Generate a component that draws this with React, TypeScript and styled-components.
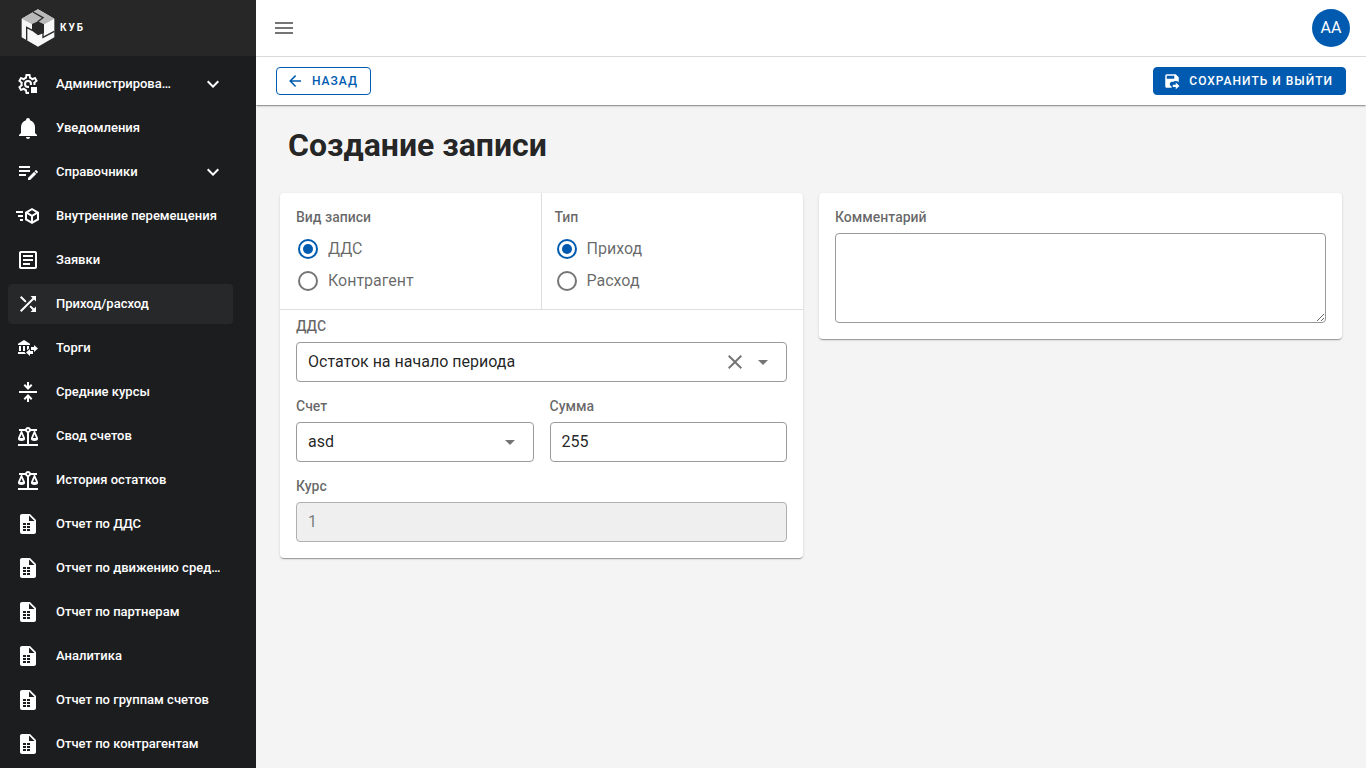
import React, { useState } from "react";
import styled, { createGlobalStyle } from "styled-components";

const color = {
  primary: "#005bb0",
  text: "rgba(0, 0, 0, 0.87)",
  muted: "rgba(0, 0, 0, 0.6)",
  icon: "rgba(0, 0, 0, 0.54)",
  outline: "#9a9a9a",
  divider: "#dedede",
  page: "#f4f4f4",
  sidebar: "#1c1d1f",
  brand: "#272727",
  active: "#27282a",
};

const elevation =
  "0 2px 1px -1px rgba(0,0,0,.2), 0 1px 1px 0 rgba(0,0,0,.14), 0 1px 3px 0 rgba(0,0,0,.12)";

const GlobalStyle = createGlobalStyle`
  *, *::before, *::after { box-sizing: border-box; }
  body {
    margin: 0;
    background: ${color.page};
    color: ${color.text};
    font-family: Roboto, "Liberation Sans", sans-serif;
    font-size: 16px;
    line-height: 24px;
  }
  button, input, select, textarea { font: inherit; color: inherit; }
`;

/* Icons */

const paths = {
  bell: "M21,19V20H3V19L5,17V11C5,7.9 7.03,5.17 10,4.29C10,4.19 10,4.1 10,4A2,2 0 0,1 12,2A2,2 0 0,1 14,4C14,4.1 14,4.19 14,4.29C16.97,5.17 19,7.9 19,11V17L21,19M14,21A2,2 0 0,1 12,23A2,2 0 0,1 10,21",
  listEdit:
    "M3 6V8H14V6H3M3 10V12H14V10H3M20 10.1C19.9 10.1 19.7 10.2 19.6 10.3L18.6 11.3L20.7 13.4L21.7 12.4C21.9 12.2 21.9 11.8 21.7 11.6L20.4 10.3C20.3 10.2 20.2 10.1 20 10.1M18.1 11.8L12 17.9V20H14.1L20.2 13.9L18.1 11.8M3 14V16H10V14H3Z",
  cubeSend:
    "M16,4L9,8.04V15.96L16,20L23,15.96V8.04M16,6.31L19.8,8.5L16,10.69L12.21,8.5M0,7V9H7V7M11,10.11L15,12.42V17.11L11,14.81M21,10.11V14.81L17,17.11V12.42M2,11V13H7V11M4,15V17H7V15",
  textBox:
    "M5,3C3.89,3 3,3.89 3,5V19C3,20.11 3.89,21 5,21H19C20.11,21 21,20.11 21,19V5C21,3.89 20.11,3 19,3H5M5,5H19V19H5V5M7,7V9H17V7H7M7,11V13H17V11H7M7,15V17H14V15H7Z",
  shuffle:
    "M14.83,13.41L13.42,14.82L16.55,17.95L14.5,20H20V14.5L17.96,16.54L14.83,13.41M14.5,4L16.54,6.04L4,18.59L5.41,20L17.96,7.46L20,9.5V4M10.59,9.17L5.41,4L4,5.41L9.17,10.58L10.59,9.17Z",
  bank: "M15,14V11H18V9L22,12.5L18,16V14H15M14,7.7V9H2V7.7L8,4L14,7.7M7,10H9V15H7V10M3,10H5V15H3V10M13,10V12.5L11,14.3V10H13M9.1,16L8.5,16.5L10.2,18H2V16H9.1M17,15V18H14V20L10,16.5L14,13V15H17Z",
  average:
    "M3 11H21V13H3ZM11 2H13V6L15 4.1L16.4 5.5L12 9.9L7.6 5.5L9 4.1L11 6ZM11 22H13V18L15 19.9L16.4 18.5L12 14.1L7.6 18.5L9 19.9L11 18Z",
  scale:
    "M12,3C10.73,3 9.6,3.8 9.18,5H3V7H4.95L2,14C1.53,16 3,17 5.5,17C8,17 9.56,16 9,14L6.05,7H9.17C9.5,7.85 10.15,8.5 11,8.83V20H2V22H22V20H13V8.82C13.85,8.5 14.5,7.85 14.82,7H17.95L15,14C14.53,16 16,17 18.5,17C21,17 22.56,16 22,14L19.05,7H21V5H14.83C14.4,3.8 13.27,3 12,3M12,5A1,1 0 0,1 13,6A1,1 0 0,1 12,7A1,1 0 0,1 11,6A1,1 0 0,1 12,5M5.5,10.25L7,14H4L5.5,10.25M18.5,10.25L20,14H17L18.5,10.25Z",
  report:
    "M14 2H6C4.89 2 4 2.9 4 4V20C4 21.11 4.89 22 6 22H18C19.11 22 20 21.11 20 20V8L14 2M10 19H7V17H10V19M10 16H7V14H10V16M10 13H7V11H10V13M14 19H11V17H14V19M14 16H11V14H14V16M14 13H11V11H14V13M13 9V3.5L18.5 9H13Z",
  menu: "M3,6H21V8H3V6M3,11H21V13H3V11M3,16H21V18H3V16Z",
  arrowLeft:
    "M20,11V13H8L13.5,18.5L12.08,19.92L4.16,12L12.08,4.08L13.5,5.5L8,11H20Z",
  saveExit:
    "M17,3H5A2,2 0 0,0 3,5V19A2,2 0 0,0 5,21H11.81C11.42,20.34 11.17,19.6 11.07,18.84C9.5,18.31 8.66,16.6 9.2,15.03C9.61,13.83 10.73,13 12,13C12.44,13 12.88,13.1 13.28,13.29C15.57,11.5 18.83,11.59 21,13.54V7L17,3M15,9H5V5H15V9M13,17H17V14L22,18.5L17,23V20H13V17",
  close:
    "M19,6.41L17.59,5L12,10.59L6.41,5L5,6.41L10.59,12L5,17.59L6.41,19L12,13.41L17.59,19L19,17.59L13.41,12L19,6.41Z",
  caret: "M7,10L12,15L17,10H7Z",
  chevron:
    "M7.41,8.58L12,13.17L16.59,8.58L18,10L12,16L6,10L7.41,8.58Z",
};

const cogPath =
  "M12,8A4,4 0 0,1 16,12A4,4 0 0,1 12,16A4,4 0 0,1 8,12A4,4 0 0,1 12,8M12,10A2,2 0 0,0 10,12A2,2 0 0,0 12,14A2,2 0 0,0 14,12A2,2 0 0,0 12,10M10,22C9.75,22 9.54,21.82 9.5,21.58L9.13,18.93C8.5,18.68 7.96,18.34 7.44,17.94L4.95,18.95C4.73,19.03 4.46,18.95 4.34,18.73L2.34,15.27C2.21,15.05 2.27,14.78 2.46,14.63L4.57,12.97L4.5,12L4.57,11L2.46,9.37C2.27,9.22 2.21,8.95 2.34,8.73L4.34,5.27C4.46,5.05 4.73,4.96 4.95,5.05L7.44,6.05C7.96,5.66 8.5,5.32 9.13,5.07L9.5,2.42C9.54,2.18 9.75,2 10,2H14C14.25,2 14.46,2.18 14.5,2.42L14.87,5.07C15.5,5.32 16.04,5.66 16.56,6.05L19.05,5.05C19.27,4.96 19.54,5.05 19.66,5.27L21.66,8.73C21.79,8.95 21.73,9.22 21.54,9.37L19.43,11L19.5,12L19.43,13L21.54,14.63C21.73,14.78 21.79,15.05 21.66,15.27L19.66,18.73C19.54,18.95 19.27,19.04 19.05,18.95L16.56,17.95C16.04,18.34 15.5,18.68 14.87,18.93L14.5,21.58C14.46,21.82 14.25,22 14,22H10M11.25,4L10.88,6.61C9.68,6.86 8.62,7.5 7.85,8.39L5.44,7.35L4.69,8.65L6.8,10.2C6.4,11.37 6.4,12.64 6.8,13.8L4.68,15.36L5.43,16.66L7.86,15.62C8.63,16.5 9.68,17.14 10.87,17.38L11.24,20H12.76L13.13,17.39C14.32,17.14 15.37,16.5 16.14,15.62L18.57,16.66L19.32,15.36L17.2,13.81C17.6,12.64 17.6,11.37 17.2,10.2L19.31,8.65L18.56,7.35L16.15,8.39C15.38,7.5 14.32,6.86 13.12,6.62L12.75,4H11.25Z";

type IconName = keyof typeof paths | "cogStop";

const Svg = styled.svg`
  display: block;
  flex: none;
  fill: currentColor;
`;

function Icon({ name, size = 24 }: { name: IconName; size?: number }) {
  const frame = { width: size, height: size, viewBox: "0 0 24 24", "aria-hidden": true };
  if (name === "cogStop") {
    return (
      <Svg {...frame}>
        <mask id="cog-cut">
          <rect width="24" height="24" fill="#fff" />
          <rect x="13" y="13" width="11" height="11" fill="#000" />
        </mask>
        <path d={cogPath} mask="url(#cog-cut)" />
        <rect x="15" y="15" width="6" height="6" />
      </Svg>
    );
  }
  return (
    <Svg {...frame}>
      <path d={paths[name]} />
    </Svg>
  );
}

function Logo() {
  return (
    <Svg width="34" height="38" viewBox="0 0 102 114" aria-hidden>
      <path fill="#f7f7f7" d="M51 1 100 29V85L51 113 2 85V29Z" />
      <path fill="#b9b9b9" d="M51 1 100 29 70 46 51 37 33 46 2 29Z" />
      <path fill={color.brand} d="M33 45 51 37 69 46V72L51 79 33 65Z" />
      <path
        fill="none"
        stroke={color.brand}
        strokeWidth="4"
        d="M36 9 66 26 50 38M17 94V55L34 64M100 67 66 85V70"
      />
    </Svg>
  );
}

/* Page frame */

const Shell = styled.div`
  display: flex;
  min-height: 100vh;
`;

const Sidebar = styled.aside`
  flex: none;
  width: 256px;
  height: 100vh;
  position: sticky;
  top: 0;
  display: flex;
  flex-direction: column;
  background: ${color.sidebar};
  color: #fff;
`;

const Brand = styled.a`
  flex: none;
  display: flex;
  align-items: center;
  gap: 5px;
  height: 56px;
  padding: 0 21px;
  background: ${color.brand};
  color: #fff;
  font-size: 10px;
  font-weight: 700;
  letter-spacing: 2px;
  text-decoration: none;
`;

const NavList = styled.nav`
  flex: 1;
  min-height: 0;
  overflow: hidden;
  display: flex;
  flex-direction: column;
  gap: 4px;
  padding: 8px 23px 0 8px;
`;

const NavItem = styled.a<{ $active?: boolean }>`
  flex: none;
  display: flex;
  align-items: center;
  height: 40px;
  padding: 0 8px;
  border-radius: 4px;
  background: ${(p) => (p.$active ? color.active : "transparent")};
  color: #fff;
  text-decoration: none;
`;

const NavLabel = styled.span`
  flex: 1;
  min-width: 0;
  margin-left: 16px;
  overflow: hidden;
  text-overflow: ellipsis;
  white-space: nowrap;
  font-size: 13px;
  font-weight: 500;
  line-height: 16px;
`;

const NavChevron = styled.span`
  padding-left: 24px;
`;

const Content = styled.div`
  flex: 1;
  min-width: 0;
`;

const TopBar = styled.header`
  display: flex;
  align-items: center;
  justify-content: space-between;
  height: 57px;
  padding: 0 16px;
  background: #fff;
  border-bottom: 1px solid ${color.divider};
`;

const IconButton = styled.button`
  display: flex;
  padding: 0;
  border: 0;
  background: none;
  color: ${color.icon};
  cursor: pointer;
`;

const Avatar = styled.button`
  width: 38px;
  height: 38px;
  padding: 0;
  border: 0;
  border-radius: 50%;
  background: ${color.primary};
  color: #fff;
  cursor: pointer;
`;

const ActionBar = styled.div`
  display: flex;
  align-items: center;
  justify-content: space-between;
  height: 48px;
  padding: 0 20px;
  background: #fff;
  box-shadow: ${elevation};
`;

const ActionButton = styled.button<{ $filled?: boolean }>`
  display: flex;
  align-items: center;
  gap: 8px;
  height: 28px;
  padding: 0 12px 0 9px;
  border: 1px solid ${color.primary};
  border-radius: 4px;
  background: ${(p) => (p.$filled ? color.primary : "transparent")};
  color: ${(p) => (p.$filled ? "#fff" : color.primary)};
  font-size: 12px;
  font-weight: 500;
  letter-spacing: 1px;
  text-transform: uppercase;
  cursor: pointer;
`;

const Main = styled.main`
  padding: 20px 24px 24px;
`;

const Title = styled.h1`
  margin: 0 8px 28px;
  font-size: 32px;
  font-weight: 700;
  line-height: 40px;
`;

/* Form */

const Cards = styled.form`
  display: grid;
  grid-template-columns: 1fr 1fr;
  align-items: start;
  gap: 16px;
`;

const Card = styled.section`
  background: #fff;
  border-radius: 4px;
  box-shadow: ${elevation};
`;

const ChoiceRow = styled.div`
  display: flex;
  border-bottom: 1px solid ${color.divider};
`;

const ChoiceGroup = styled.div.attrs({ role: "radiogroup" })`
  flex: 1;
  min-width: 0;
  padding: 12px 14px;

  &:first-child {
    flex: none;
    width: 50%;
    max-width: calc(50% - 1px);
    padding-left: 16px;
    box-shadow: 1px 0 ${color.divider};
  }
`;

const Caption = styled.span`
  display: block;
  margin-bottom: 4px;
  color: ${color.muted};
  font-size: 14px;
  font-weight: 500;
  line-height: 24px;
`;

const Choice = styled.label`
  display: flex;
  align-items: center;
  gap: 10px;
  height: 32px;
  padding-left: 2px;
  color: ${color.muted};
  cursor: pointer;
`;

const ChoiceTitle = styled(Caption)`
  margin-bottom: 4px;
`;

const Radio = styled.input.attrs({ type: "radio" })`
  appearance: none;
  flex: none;
  width: 20px;
  height: 20px;
  margin: 0;
  padding: 3px;
  border: 2px solid #757575;
  border-radius: 50%;

  &:checked {
    border-color: ${color.primary};
  }

  &:checked::before {
    content: "";
    display: block;
    width: 10px;
    height: 10px;
    border-radius: 50%;
    background: ${color.primary};
  }
`;

const Fields = styled.div`
  display: grid;
  grid-template-columns: 1fr 1fr;
  gap: 12px 16px;
  padding: 4px 16px 16px;
`;

const Field = styled.div<{ $wide?: boolean }>`
  grid-column: ${(p) => (p.$wide ? "1 / -1" : "auto")};
  min-width: 0;
`;

const Control = styled.div`
  position: relative;
`;

const Box = styled.input`
  display: block;
  width: 100%;
  height: 40px;
  padding: 0 11px 2px;
  border: 1px solid ${color.outline};
  border-radius: 4px;
  background: #fff;
  color: ${color.text};

  &:disabled {
    border-color: #b0b0b0;
    background: #efefef;
    color: rgba(0, 0, 0, 0.5);
  }
`;

const SelectBox = styled(Box).attrs({ as: "select" })`
  appearance: none;
  padding: 0 64px 0 11px;
`;

const Adornments = styled.div`
  position: absolute;
  top: 8px;
  right: 12px;
  display: flex;
  gap: 4px;
  color: ${color.icon};
  pointer-events: none;

  button {
    pointer-events: auto;
  }
`;

const CommentBody = styled.div`
  padding: 12px 16px 16px;
`;

const TextArea = styled.textarea`
  display: block;
  width: 100%;
  height: 90px;
  padding: 8px 11px;
  border: 1px solid ${color.outline};
  border-radius: 4px;
  background: #fff;
  resize: vertical;
`;

const navigation: { icon: IconName; label: string; group?: boolean; active?: boolean }[] = [
  { icon: "cogStop", label: "Администрирование", group: true },
  { icon: "bell", label: "Уведомления" },
  { icon: "listEdit", label: "Справочники", group: true },
  { icon: "cubeSend", label: "Внутренние перемещения" },
  { icon: "textBox", label: "Заявки" },
  { icon: "shuffle", label: "Приход/расход", active: true },
  { icon: "bank", label: "Торги" },
  { icon: "average", label: "Средние курсы" },
  { icon: "scale", label: "Свод счетов" },
  { icon: "scale", label: "История остатков" },
  { icon: "report", label: "Отчет по ДДС" },
  { icon: "report", label: "Отчет по движению средств" },
  { icon: "report", label: "Отчет по партнерам" },
  { icon: "report", label: "Аналитика" },
  { icon: "report", label: "Отчет по группам счетов" },
  { icon: "report", label: "Отчет по контрагентам" },
];

function RadioGroup({ title, name, options }: { title: string; name: string; options: string[] }) {
  const [value, setValue] = useState(options[0]);
  return (
    <ChoiceGroup aria-labelledby={`${name}-title`}>
      <ChoiceTitle id={`${name}-title`}>{title}</ChoiceTitle>
      {options.map((option) => (
        <Choice key={option}>
          <Radio name={name} checked={value === option} onChange={() => setValue(option)} />
          {option}
        </Choice>
      ))}
    </ChoiceGroup>
  );
}

export default function App() {
  const [article, setArticle] = useState("Остаток на начало периода");
  return (
    <>
      <GlobalStyle />
      <Shell>
        <Sidebar>
          <Brand href="#">
            <Logo />
            КУБ
          </Brand>
          <NavList>
            {navigation.map((item) => (
              <NavItem key={item.label} href="#" $active={item.active}>
                <Icon name={item.icon} />
                <NavLabel>{item.label}</NavLabel>
                {item.group && (
                  <NavChevron>
                    <Icon name="chevron" />
                  </NavChevron>
                )}
              </NavItem>
            ))}
          </NavList>
        </Sidebar>
        <Content>
          <TopBar>
            <IconButton type="button" aria-label="Меню">
              <Icon name="menu" />
            </IconButton>
            <Avatar type="button">АА</Avatar>
          </TopBar>
          <ActionBar>
            <ActionButton type="button">
              <Icon name="arrowLeft" size={18} />
              Назад
            </ActionButton>
            <ActionButton type="submit" form="record" $filled>
              <Icon name="saveExit" size={18} />
              Сохранить и выйти
            </ActionButton>
          </ActionBar>
          <Main>
            <Title>Создание записи</Title>
            <Cards id="record" onSubmit={(e) => e.preventDefault()}>
              <Card>
                <ChoiceRow>
                  <RadioGroup title="Вид записи" name="kind" options={["ДДС", "Контрагент"]} />
                  <RadioGroup title="Тип" name="type" options={["Приход", "Расход"]} />
                </ChoiceRow>
                <Fields>
                  <Field $wide>
                    <Caption as="label" htmlFor="article">
                      ДДС
                    </Caption>
                    <Control>
                      <SelectBox
                        id="article"
                        value={article}
                        onChange={(e: any) => setArticle(e.target.value)}
                      >
                        <option value="" />
                        <option>Остаток на начало периода</option>
                      </SelectBox>
                      <Adornments>
                        <IconButton type="button" aria-label="Очистить" onClick={() => setArticle("")}>
                          <Icon name="close" />
                        </IconButton>
                        <Icon name="caret" />
                      </Adornments>
                    </Control>
                  </Field>
                  <Field>
                    <Caption as="label" htmlFor="account">
                      Счет
                    </Caption>
                    <Control>
                      <SelectBox id="account">
                        <option>asd</option>
                      </SelectBox>
                      <Adornments>
                        <Icon name="caret" />
                      </Adornments>
                    </Control>
                  </Field>
                  <Field>
                    <Caption as="label" htmlFor="amount">
                      Сумма
                    </Caption>
                    <Box id="amount" defaultValue="255" />
                  </Field>
                  <Field $wide>
                    <Caption as="label" htmlFor="rate">
                      Курс
                    </Caption>
                    <Box id="rate" defaultValue="1" disabled />
                  </Field>
                </Fields>
              </Card>
              <Card>
                <CommentBody>
                  <Caption as="label" htmlFor="comment">
                    Комментарий
                  </Caption>
                  <TextArea id="comment" />
                </CommentBody>
              </Card>
            </Cards>
          </Main>
        </Content>
      </Shell>
    </>
  );
}
